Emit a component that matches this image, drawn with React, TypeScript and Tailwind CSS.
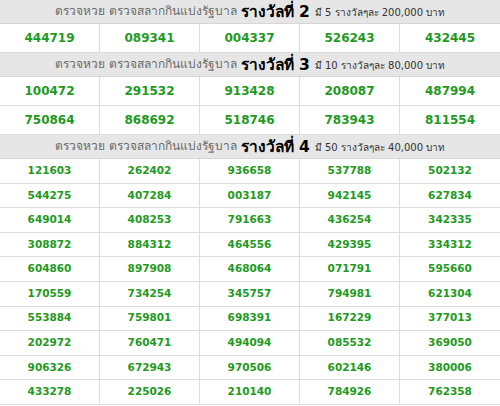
import React from "react";

type Prize = {
  title: string;
  count: number;
  amount: string;
  numbers: string[];
  big: boolean;
};

const prizes: Prize[] = [
  {
    title: "รางวัลที่ 2",
    count: 5,
    amount: "200,000",
    big: true,
    numbers: ["444719", "089341", "004337", "526243", "432445"],
  },
  {
    title: "รางวัลที่ 3",
    count: 10,
    amount: "80,000",
    big: true,
    numbers: [
      "100472", "291532", "913428", "208087", "487994",
      "750864", "868692", "518746", "783943", "811554",
    ],
  },
  {
    title: "รางวัลที่ 4",
    count: 50,
    amount: "40,000",
    big: false,
    numbers: [
      "121603", "262402", "936658", "537788", "502132",
      "544275", "407284", "003187", "942145", "627834",
      "649014", "408253", "791663", "436254", "342335",
      "308872", "884312", "464556", "429395", "334312",
      "604860", "897908", "468064", "071791", "595660",
      "170559", "734254", "345757", "794981", "621304",
      "553884", "759801", "698391", "167229", "377013",
      "202972", "760471", "494094", "085532", "369050",
      "906326", "672943", "970506", "602146", "380006",
      "433278", "225026", "210140", "784926", "762358",
    ],
  },
];

const App: React.FC = () => {
  return (
    <div className="w-[500px] h-[406px] overflow-hidden bg-white font-['Tahoma','DejaVu_Sans',sans-serif]">
      {prizes.map((prize) => (
        <section key={prize.title}>
          {/* Header */}
          <div className="h-[24px] flex items-end justify-center pb-[3px] bg-[#e6e6e6] border-b border-[#d6d6d6] whitespace-nowrap">
            <span className="text-[12px] text-[#6a6a6a]">
              ตรวจหวย ตรวจสลากกินแบ่งรัฐบาล
            </span>
            <span className="ml-[4px] text-[15.5px] font-bold text-black leading-none">
              {prize.title}
            </span>
            <span className="ml-[5px] text-[10px] text-[#333]">
              มี {prize.count} รางวัลๆละ {prize.amount} บาท
            </span>
          </div>

          {/* Numbers */}
          <div className="grid grid-cols-5">
            {prize.numbers.map((num, i) => (
              <div
                key={num}
                className={
                  (prize.big
                    ? "h-[29px] text-[12px] "
                    : "h-[24.6px] text-[10.5px] ") +
                  "flex items-center justify-center border-b border-[#dddddd] font-['DejaVu_Sans',sans-serif] font-bold text-[#1e9a1e] " +
                  (i % 5 === 4 ? "" : "border-r")
                }
              >
                {num}
              </div>
            ))}
          </div>
        </section>
      ))}
    </div>
  );
};

export default App;
